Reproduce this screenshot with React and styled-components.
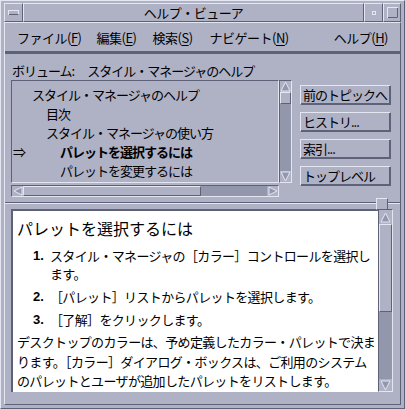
import styled, { createGlobalStyle } from 'styled-components';

const BG = '#afb1c5';
const LIGHT = '#e4e6f2';
const DARK = '#5e6278';
const TROUGH = '#9397ab';

const GlobalStyle = createGlobalStyle`
  html, body { margin: 0; padding: 0; background: ${BG}; }
  body {
    font-family: "Noto Sans CJK JP", "DejaVu Sans", sans-serif;
    font-size: 13px;
    color: #000;
  }
`;

const bevel = (up = true) => `
  border: 1px solid;
  border-color: ${up ? `${LIGHT} ${DARK} ${DARK} ${LIGHT}` : `${DARK} ${LIGHT} ${LIGHT} ${DARK}`};
`;

const Window = styled.div`
  width: 405px;
  height: 409px;
  box-sizing: border-box;
  background: ${BG};
  ${bevel(true)}
  padding: 2px 3px 3px 3px;
  display: flex;
  flex-direction: column;
  overflow: hidden;
`;

const TitleBar = styled.div`
  display: flex;
  height: 19px;
  flex-shrink: 0;
`;

const TitleButton = styled.div`
  width: ${({ w }) => w}px;
  box-sizing: border-box;
  ${bevel(true)}
  display: flex;
  align-items: center;
  justify-content: center;
`;

const TitleText = styled.div`
  flex: 1;
  box-sizing: border-box;
  ${bevel(true)}
  display: flex;
  align-items: center;
  justify-content: center;
  font-size: 13px;
  letter-spacing: -0.5px;
  line-height: 1;
`;

const Inner = styled.div`
  flex: 1;
  min-height: 0;
  display: flex;
  flex-direction: column;
  ${bevel(true)}
  box-sizing: border-box;
`;

const MenuBar = styled.div`
  display: flex;
  align-items: center;
  height: 28px;
  padding: 0 0 0 12px;
  border-bottom: 3px solid ${DARK};
  flex-shrink: 0;
`;

const MenuItem = styled.div`
  margin-right: ${({ gap }) => gap}px;
  margin-left: ${({ push }) => (push ? 'auto' : '0')};
  font-size: 13px;
  letter-spacing: -0.5px;
  white-space: nowrap;
  u { text-decoration: underline; text-underline-offset: 2px; }
`;

const Body = styled.div`
  flex: 1;
  min-height: 0;
  display: flex;
  flex-direction: column;
  padding: 7px 7px 0 6px;
`;

const VolumeLabel = styled.div`
  display: flex;
  gap: 13px;
  height: 19px;
  flex-shrink: 0;
  padding-left: 1px;
  font-size: 13px;
  letter-spacing: -1px;
  line-height: 19px;
  white-space: nowrap;
`;

const Upper = styled.div`
  display: flex;
  align-items: flex-start;
  flex-shrink: 0;
`;

const ListArea = styled.div`
  display: grid;
  grid-template-columns: 268px 13px;
  grid-template-rows: 103px 12px;
  row-gap: 2px;
`;

const TopicList = styled.div`
  box-sizing: border-box;
  ${bevel(false)}
  padding: 4px 0 0 0;
  overflow: hidden;
`;

const Topic = styled.div`
  position: relative;
  height: 19px;
  line-height: 19px;
  padding-left: ${({ level }) => 20 + level * 14}px;
  font-weight: ${({ current }) => (current ? 700 : 400)};
  letter-spacing: -1px;
  white-space: nowrap;
`;

const Pointer = styled.span`
  position: absolute;
  left: 1px;
  top: 0;
  font-weight: 400;
`;

const VScroll = styled.div`
  box-sizing: border-box;
  background: ${TROUGH};
  ${bevel(false)}
  display: flex;
  flex-direction: column;
  justify-content: space-between;
`;

const HScroll = styled.div`
  box-sizing: border-box;
  background: ${TROUGH};
  ${bevel(false)}
  display: flex;
  align-items: stretch;
`;

const Arrow = styled.div`
  width: ${({ w }) => w}px;
  height: ${({ h }) => h}px;
  flex-shrink: 0;
  display: flex;
  align-items: center;
  justify-content: center;
  background: ${BG};
`;

const Thumb = styled.div`
  box-sizing: border-box;
  background: ${BG};
  ${bevel(true)}
  width: ${({ w }) => w};
  height: ${({ h }) => h};
  flex-shrink: 0;
`;

const ButtonColumn = styled.div`
  display: flex;
  flex-direction: column;
  gap: 7px;
  margin-left: 8px;
  margin-top: 5px;
`;

const NavButton = styled.div`
  width: 91px;
  height: 20px;
  box-sizing: border-box;
  ${bevel(true)}
  box-shadow: inset -1px -1px 0 ${DARK};
  padding-left: 2px;
  line-height: 18px;
  font-size: 13px;
  letter-spacing: -1px;
  white-space: nowrap;
  overflow: hidden;
`;

const Sash = styled.div`
  position: relative;
  flex-shrink: 0;
  margin: 5px -7px 5px -6px;
  height: 2px;
  border-top: 1px solid ${DARK};
  border-bottom: 1px solid ${LIGHT};
  box-sizing: border-box;
`;

const SashHandle = styled.div`
  position: absolute;
  right: 12px;
  top: -5px;
  width: 10px;
  height: 10px;
  background: ${BG};
  ${bevel(true)}
`;

const Lower = styled.div`
  display: flex;
  height: 183px;
  flex-shrink: 0;
  overflow: hidden;
`;

const Content = styled.div`
  width: 367px;
  box-sizing: border-box;
  background: #fff;
  border-top: 2px solid ${DARK};
  border-left: 2px solid ${DARK};
  padding: 5px 0 0 4px;
  overflow: hidden;
  letter-spacing: -0.65px;
`;

const Heading = styled.div`
  font-size: 16px;
  letter-spacing: 0;
  line-height: 24px;
  margin-bottom: 7px;
  white-space: nowrap;
`;

const Steps = styled.ol`
  list-style: none;
  margin: 0 0 3px;
  padding: 0;
`;

const Step = styled.li`
  display: flex;
  margin-bottom: 5px;
  line-height: 18px;
  white-space: nowrap;
  &:last-child { margin-bottom: 0; }
`;

const StepNum = styled.span`
  width: 33px;
  padding-left: 16px;
  box-sizing: border-box;
  font-weight: 700;
  letter-spacing: 0;
  font-family: "Liberation Sans", "DejaVu Sans", sans-serif;
  flex-shrink: 0;
`;

const Paragraph = styled.p`
  margin: 0;
  line-height: 19.5px;
  white-space: nowrap;
`;

const ContentScroll = styled.div`
  width: 15px;
  box-sizing: border-box;
  background: ${TROUGH};
  ${bevel(false)}
  display: flex;
  flex-direction: column;
  align-items: stretch;
`;

const Spacer = styled.div`
  flex: 1;
`;

const Tri = ({ dir, size = 11 }) => {
  const s = size;
  const pts = {
    up: `${s / 2},1 ${s - 1},${s - 1} 1,${s - 1}`,
    down: `1,1 ${s - 1},1 ${s / 2},${s - 1}`,
    left: `1,${s / 2} ${s - 1},1 ${s - 1},${s - 1}`,
    right: `1,1 ${s - 1},${s / 2} 1,${s - 1}`,
  }[dir];
  return (
    <svg width={s} height={s} viewBox={`0 0 ${s} ${s}`}>
      <polygon points={pts} fill={TROUGH} stroke={LIGHT} strokeWidth="1" />
    </svg>
  );
};

const topics = [
  { level: 0, label: 'スタイル・マネージャのヘルプ' },
  { level: 1, label: '目次' },
  { level: 1, label: 'スタイル・マネージャの使い方' },
  { level: 2, label: 'パレットを選択するには', current: true },
  { level: 2, label: 'パレットを変更するには' },
];

const navButtons = ['前のトピックへ', 'ヒストリ...', '索引...', 'トップレベル'];

export default function App() {
  return (
    <>
      <GlobalStyle />
      <Window>
        <TitleBar>
          <TitleButton w={19}>
            <svg width="11" height="5">
              <rect x="0.5" y="0.5" width="10" height="4" fill={BG} stroke={LIGHT} />
              <line x1="1" y1="4.5" x2="10.5" y2="4.5" stroke={DARK} />
            </svg>
          </TitleButton>
          <TitleText>ヘルプ・ビューア</TitleText>
          <TitleButton w={19}>
            <svg width="4" height="4">
              <rect x="0.5" y="0.5" width="3" height="3" fill={BG} stroke={LIGHT} />
            </svg>
          </TitleButton>
          <TitleButton w={18}>
            <svg width="11" height="11">
              <rect x="0.5" y="0.5" width="10" height="10" fill={BG} stroke={LIGHT} />
              <path d="M10.5 1 V10.5 H1" fill="none" stroke={DARK} />
            </svg>
          </TitleButton>
        </TitleBar>
        <Inner>
          <MenuBar>
            <MenuItem gap={15}>ファイル(<u>F</u>)</MenuItem>
            <MenuItem gap={16}>編集(<u>E</u>)</MenuItem>
            <MenuItem gap={17}>検索(<u>S</u>)</MenuItem>
            <MenuItem gap={0}>ナビゲート(<u>N</u>)</MenuItem>
            <MenuItem gap={12} push>ヘルプ(<u>H</u>)</MenuItem>
          </MenuBar>
          <Body>
            <VolumeLabel>
              <span>ボリューム:</span>
              <span>スタイル・マネージャのヘルプ</span>
            </VolumeLabel>
            <Upper>
              <ListArea>
                <TopicList>
                  {topics.map((t) => (
                    <Topic key={t.label} level={t.level} current={t.current}>
                      {t.current && <Pointer>⇒</Pointer>}
                      {t.label}
                    </Topic>
                  ))}
                </TopicList>
                <VScroll>
                  <div>
                    <Arrow w={11} h={11}><Tri dir="up" /></Arrow>
                    <Thumb w="11px" h="12px" />
                  </div>
                  <Arrow w={11} h={11}><Tri dir="down" /></Arrow>
                </VScroll>
                <HScroll>
                  <Arrow w={11} h={10}><Tri dir="left" size={10} /></Arrow>
                  <Thumb w="178px" h="10px" />
                  <Spacer />
                  <Arrow w={11} h={10}><Tri dir="right" size={10} /></Arrow>
                </HScroll>
              </ListArea>
              <ButtonColumn>
                {navButtons.map((b) => (
                  <NavButton key={b}>{b}</NavButton>
                ))}
              </ButtonColumn>
            </Upper>
            <Sash>
              <SashHandle />
            </Sash>
            <Lower>
              <Content>
                <Heading>パレットを選択するには</Heading>
                <Steps>
                  <Step>
                    <StepNum>1.</StepNum>
                    <span>
                      スタイル・マネージャの［カラー］コントロールを選択し
                      <br />
                      ます。
                    </span>
                  </Step>
                  <Step>
                    <StepNum>2.</StepNum>
                    <span>［パレット］リストからパレットを選択します。</span>
                  </Step>
                  <Step>
                    <StepNum>3.</StepNum>
                    <span>［了解］をクリックします。</span>
                  </Step>
                </Steps>
                <Paragraph>
                  デスクトップのカラーは、予め定義したカラー・パレットで決ま
                  <br />
                  ります。［カラー］ダイアログ・ボックスは、ご利用のシステム
                  <br />
                  のパレットとユーザが追加したパレットをリストします。
                </Paragraph>
              </Content>
              <ContentScroll>
                <Arrow w={13} h={14}><Tri dir="up" /></Arrow>
                <Thumb w="13px" h="88px" />
                <Spacer />
                <Arrow w={13} h={12}><Tri dir="down" /></Arrow>
              </ContentScroll>
            </Lower>
          </Body>
        </Inner>
      </Window>
    </>
  );
}
